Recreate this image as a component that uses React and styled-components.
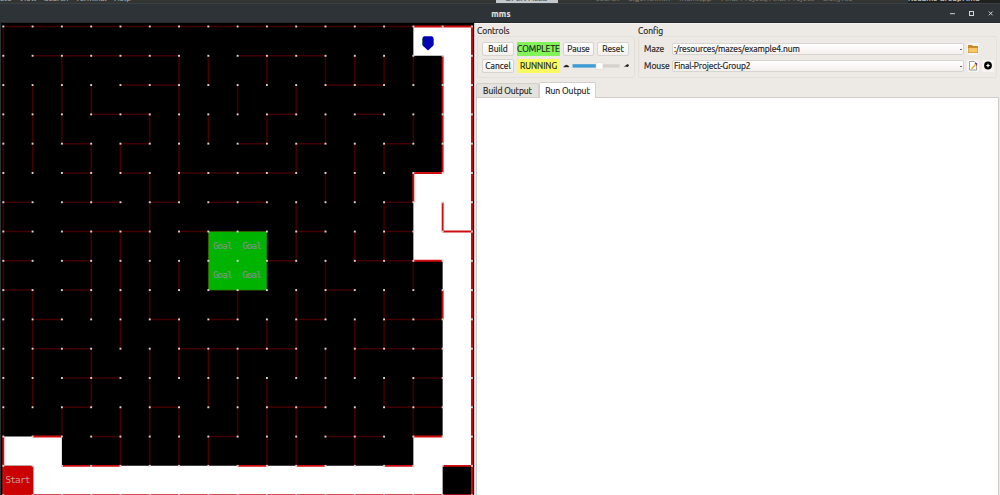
import React from 'react';
import styled, { createGlobalStyle } from 'styled-components';

const Global = createGlobalStyle`
  * { box-sizing: border-box; }
  html, body { margin: 0; height: 495px; overflow: hidden; background: #edeae5; }
`;

const Page = styled.div`
  width: 1000px;
  height: 495px;
  display: flex;
  flex-direction: column;
  overflow: hidden;
  font-family: Ubuntu, 'Noto Sans', 'Open Sans', sans-serif;
  font-size: 8.5px;
  -webkit-text-stroke: 0.2px currentColor;
  color: #1b1b1b;
`;

const Behind = styled.div`
  height: 3px;
  flex: none;
  display: flex;
  overflow: hidden;
  background: #333533;
  color: #a5a6a4;
  font-size: 8px;
  line-height: 10px;
`;
const Peek = styled.span`
  flex: none;
  width: ${p => p.$w}px;
  padding-left: ${p => p.$pad || 0}px;
  height: 10px;
  margin-top: -6px;
  white-space: pre;
  background: ${p => p.$bg || 'transparent'};
  color: ${p => p.$fg || 'inherit'};
`;

const TitleBar = styled.header`
  height: 20px;
  flex: none;
  display: grid;
  grid-template-columns: 1fr 60px;
  align-items: center;
  background: #2d3336;
  border-top: 1px solid #3c4244;
  border-bottom: 1px solid #24292b;
`;
const Title = styled.div`
  padding: 1px 0 0 62px;
  text-align: center;
  color: #dfdfdc;
  font-weight: 700;
  font-size: 8.6px;
  line-height: 16px;
  letter-spacing: 0.2px;
`;
const WindowIcons = styled.svg`
  width: 60px;
  height: 18px;
  display: block;
`;

const Body = styled.main`
  flex: 1;
  min-height: 0;
  display: flex;
`;
const MazeSvg = styled.svg`
  flex: none;
  width: 475px;
  height: 472px;
  display: block;
`;
const Side = styled.section`
  flex: 1;
  min-width: 0;
  display: flex;
  flex-direction: column;
  background: #edeae5;
  border-top: 1px solid #f6f4f1;
`;
const Panels = styled.div`
  display: flex;
  height: 58px;
  flex: none;
  padding: 1px 3px 0 2px;
  gap: 3px;
`;
const Group = styled.div`
  width: ${p => (p.$w ? p.$w + 'px' : 'auto')};
  flex: ${p => (p.$w ? 'none' : 1)};
  min-width: 0;
`;
const GroupTitle = styled.div`
  height: 11px;
  line-height: 13px;
`;
const Frame = styled.div`
  height: 42px;
  border: 1px solid #e4e0db;
  border-radius: 2px;
  padding: 5px 4px;
  display: grid;
  grid-template-columns: ${p => p.$cols};
  grid-template-rows: 14px 14px;
  gap: 3px ${p => p.$gap}px;
`;
const Button = styled.button`
  padding: 0;
  margin: 0;
  border: 1px solid #d8d4cf;
  border-radius: 2px;
  background: linear-gradient(#fdfdfc, #f3f1ee);
  font: inherit;
  color: inherit;
  line-height: 12px;
  white-space: nowrap;
  display: flex;
  align-items: center;
  justify-content: center;
`;
const Status = styled.div`
  background: ${p => p.$bg};
  line-height: 14px;
  text-align: center;
  white-space: nowrap;
  font-size: 8.5px;
`;
const SpeedSvg = styled.svg`
  grid-column: 3 / 5;
  width: 68px;
  height: 14px;
  display: block;
`;
const Label = styled.div`
  line-height: 14px;
  padding-left: 1px;
`;
const Combo = styled.div`
  height: 12px;
  margin-top: 1px;
  border: 1px solid #d8d4cf;
  border-radius: 2px;
  background: linear-gradient(#ffffff, #f2f0ed);
  line-height: 10px;
  letter-spacing: -0.1px;
  padding: 0 1px;
  display: flex;
  justify-content: space-between;
  align-items: center;
`;
const Arrow = styled.i`
  width: 2px;
  height: 1px;
  background: #6d6b68;
`;
const Glyph = styled.svg`
  width: 12px;
  height: 12px;
  margin-top: 1px;
  display: block;
  background: ${p => (p.$flat ? 'transparent' : '#f7f5f3')};
  border-radius: 2px;
`;
const Tabs = styled.div`
  display: flex;
  align-items: flex-end;
  height: 16px;
  flex: none;
  padding-left: 1px;
  position: relative;
  z-index: 1;
`;
const Tab = styled.div`
  width: ${p => p.$w}px;
  height: ${p => (p.$on ? 16 : 15)}px;
  line-height: ${p => (p.$on ? 16 : 14)}px;
  text-align: center;
  letter-spacing: -0.05px;
  border: 1px solid #d3cfca;
  border-bottom: ${p => (p.$on ? '0' : '1px solid #d3cfca')};
  border-radius: 2px 2px 0 0;
  background: ${p => (p.$on ? '#ffffff' : '#e5e2dd')};
`;
const Output = styled.div`
  flex: 1;
  margin: -1px 1px 0 1px;
  border: 1px solid #cfcbc6;
  border-bottom: 0;
  background: #fff;
`;

const PITCH = 29.29;
const X0 = 3.3;
const Y0 = 3.5;
const px = k => X0 + k * PITCH;
const py = k => Y0 + k * PITCH;

// Each entry is the index of a grid line followed by [from, to] spans on it.
const DIM_H = [
  [0, [0, 14]], [1, [1, 6], [8, 11]], [2, [4, 6], [11, 13]],
  [3, [3, 5], [9, 10], [12, 13]], [4, [2, 3], [4, 5], [8, 9], [10, 11], [13, 14]],
  [5, [2, 3], [4, 5], [6, 10]], [6, [0, 1], [2, 4], [5, 6], [7, 9], [13, 14]],
  [7, [0, 1], [2, 5], [6, 7], [10, 11], [13, 14]], [8, [0, 1], [2, 3], [9, 10], [12, 14]],
  [9, [0, 1], [2, 3], [11, 12]], [10, [1, 2], [5, 6], [7, 8], [10, 11], [13, 15]],
  [11, [1, 3], [6, 10], [12, 15]], [12, [2, 4], [14, 15]],
  [13, [2, 3], [5, 6], [9, 11], [13, 15]], [14, [3, 4], [7, 8], [11, 13]],
];
const DIM_V = [
  [0, [0, 14]], [1, [2, 5], [9, 13]], [2, [1, 4], [13, 14]],
  [3, [2, 3], [4, 6], [7, 10], [11, 13]], [4, [4, 5], [7, 11], [13, 15]],
  [5, [3, 4], [5, 10], [11, 15]], [6, [1, 6], [8, 9], [10, 12], [13, 15]],
  [7, [1, 2], [3, 4], [11, 13], [14, 15]], [8, [2, 3], [9, 10], [11, 14]],
  [9, [1, 2], [3, 4], [10, 11], [12, 15]],
  [10, [2, 3], [4, 5], [6, 8], [9, 12], [13, 15]],
  [11, [1, 2], [3, 4], [5, 6], [8, 10], [11, 13]],
  [12, [1, 2], [4, 6], [7, 8], [10, 12], [13, 15]],
  [13, [1, 2], [4, 5], [6, 8], [9, 11], [12, 13]],
  [14, [1, 2], [3, 4], [8, 9], [12, 14]],
];
const LIT_H = [
  [0, [14, 16]], [5, [14, 15]], [7, [15, 16]], [8, [14, 15]], [14, [1, 2], [14, 15]],
  [15, [2, 4], [8, 9], [10, 11], [13, 14], [15, 16]], [16, [0, 16]],
];
const LIT_V = [
  [0, [14, 16]], [14, [5, 6]], [15, [1, 5], [6, 7], [9, 10]], [16, [0, 16]],
];
// Outline of the visited corridor, as grid corners [column, row].
const VISITED = [
  [14, 0], [16, 0], [16, 15], [15, 15], [15, 16], [1, 16], [1, 15], [0, 15], [0, 14], [2, 14],
  [2, 15], [14, 15], [14, 14], [15, 14], [15, 8], [14, 8], [14, 5], [15, 5], [15, 1], [14, 1],
];

const hPath = list => list.map(([k, ...s]) => s.map(([a, b]) => `M${px(a)} ${py(k)}H${px(b)}`).join('')).join('');
const vPath = list => list.map(([k, ...s]) => s.map(([a, b]) => `M${px(k)} ${py(a)}V${py(b)}`).join('')).join('');
const N17 = Array.from({ length: 17 }, (_, i) => i);

function Maze() {
  return (
    <MazeSvg viewBox="0 0 475 472">
      <rect width="475" height="472" fill="#000" />
      <rect width="1" height="472" fill="#2a3236" />
      <rect x="474" width="1" height="472" fill="#cfc8c6" />
      <polygon points={VISITED.map(([c, r]) => `${px(c)},${py(r)}`).join(' ')} fill="#fff" />
      <rect x={px(7)} y={py(7)} width={2 * PITCH} height={2 * PITCH} fill="#00b300" stroke="#4a5a00" strokeWidth=".6" />
      <rect x={px(0)} y={py(15)} width={PITCH + 0.8} height={PITCH} fill="#cb0000" />
      <path d={hPath(DIM_H) + vPath(DIM_V)} stroke="#420003" strokeWidth="1.5" fill="none" />
      <path d={hPath(LIT_H) + vPath(LIT_V)} stroke="#cf0d10" strokeWidth="1.9" fill="none" />
      {N17.map(r => N17.map(c => (
        <rect key={`${r}-${c}`} x={px(c) - 0.95} y={py(r) - 0.95} width="1.9" height="1.9" fill="#dbd6d4" />
      )))}
      <g fontFamily="'DejaVu Sans Mono', monospace" fontSize="9" textAnchor="middle">
        {[[7, 7], [8, 7], [7, 8], [8, 8]].map(([c, r]) => (
          <text key={`${c}${r}`} x={px(c) + 14.3} y={py(r) + 17.4} textLength="19.5" fill="#7f947c" stroke="#7f947c" strokeWidth=".2">Goal</text>
        ))}
        <text x={px(0) + 14.6} y={py(15) + 17.6} textLength="25" fontSize="9.4" fill="#c79c99">Start</text>
      </g>
      <path d="M422.6 14.5L424 13.2H432L433.4 14.5V22.5L428 27.6L422.6 22.5Z" fill="#0000b4" />
      <path d="M422.5 15.5V22M433.5 15.5V22" stroke="#14705c" strokeWidth="0.8" />
    </MazeSvg>
  );
}

export default function App() {
  return (
    <Page>
      <Global />
      <Behind>
        <Peek $w={496}>{'ate    View    Search    Terminal    Help'}</Peek>
        <Peek $w={62} $pad={9} $bg="#c3c8cc" $fg="#4c5256">OPEN FILES</Peek>
        <Peek $w={350} $pad={38} $fg="#737572">{'search     algorithm.h     main.cpp     Final-Project/Final-Project     Doxyfile'}</Peek>
        <Peek $w={92} $bg="#1f211f" $fg="#d5d5d2">Readme Group7.md</Peek>
      </Behind>
      <TitleBar>
        <Title>mms</Title>
        <WindowIcons viewBox="0 0 60 18" fill="none" stroke="#d3d5d4" strokeWidth="1">
          <path d="M10 9.7H15" />
          <rect x="29.5" y="7.5" width="4" height="4" />
          <path d="M48.8 7.5L52.6 11.3M52.6 7.5L48.8 11.3" />
        </WindowIcons>
      </TitleBar>
      <Body>
        <Maze />
        <Side>
          <Panels>
            <Group $w={158}>
              <GroupTitle>Controls</GroupTitle>
              <Frame $cols="32px 43px 31px 32px" $gap={3}>
                <Button>Build</Button>
                <Status $bg="#83f35a">COMPLETE</Status>
                <Button>Pause</Button>
                <Button>Reset</Button>
                <Button>Cancel</Button>
                <Status $bg="#fbfb60">RUNNING</Status>
                <SpeedSvg viewBox="0 0 68 14">
                  <path d="M0.5 8Q3 4.5 5.5 7L6 8Z" fill="#222" stroke="#222" strokeWidth=".4" />
                  <rect x="9.5" y="5.2" width="27" height="3.4" fill="#3d9bd6" />
                  <rect x="36" y="5.2" width="20.5" height="3.4" fill="#d5d2ce" />
                  <rect x="33" y="3.5" width="7" height="7" rx="1" fill="#fcfbfa" stroke="#d6d2cd" strokeWidth=".6" />
                  <path d="M60.5 8.4L63 6L65 5L66 6.6L64.8 8L62.5 7.5Z" fill="#222" />
                </SpeedSvg>
              </Frame>
            </Group>
            <Group>
              <GroupTitle>Config</GroupTitle>
              <Frame $cols="26px 292px 12px 12px" $gap={3}>
                <Label>Maze</Label>
                <Combo>:/resources/mazes/example4.num<Arrow /></Combo>
                <Glyph viewBox="0 0 12 12">
                  <path d="M1 2H5L6 3H11V10H1Z" fill="#c98a2c" />
                  <path d="M1.5 5H10.5V9.5H1.5Z" fill="#f7c667" />
                </Glyph>
                <i />
                <Label>Mouse</Label>
                <Combo>Final-Project-Group2<Arrow /></Combo>
                <Glyph viewBox="0 0 12 12">
                  <path d="M2.5 1.5H7.5L9.5 3.5V10H2.5Z" fill="#fff" stroke="#777" strokeWidth=".7" />
                  <path d="M4.5 9L8.5 4.5" stroke="#e9b62f" strokeWidth="1.7" />
                  <path d="M7.8 3.6H9.6V5.4" stroke="#6b3f87" strokeWidth="1.1" fill="none" />
                </Glyph>
                <Glyph viewBox="0 0 12 12">
                  <circle cx="6" cy="5.5" r="3.9" fill="#000" />
                  <path d="M6 3.8V7.2M4.3 5.5H7.7" stroke="#fff" strokeWidth="1.2" />
                </Glyph>
              </Frame>
            </Group>
          </Panels>
          <Tabs>
            <Tab $w={63}>Build Output</Tab>
            <Tab $w={57} $on>Run Output</Tab>
          </Tabs>
          <Output />
        </Side>
      </Body>
    </Page>
  );
}
